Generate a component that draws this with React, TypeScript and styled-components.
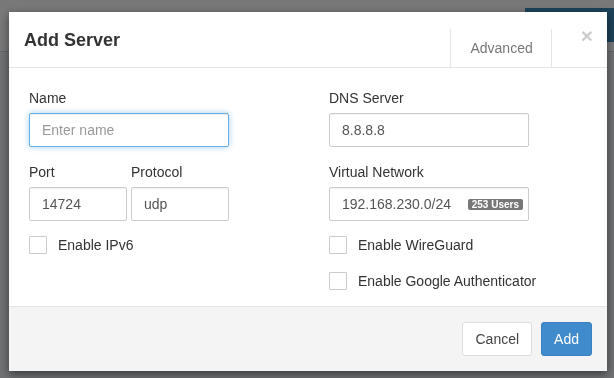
import React from 'react';
import styled, { createGlobalStyle } from 'styled-components';

const GlobalStyle = createGlobalStyle`
  html, body {
    margin: 0;
    padding: 0;
    height: 100%;
  }
  body {
    font-family: "Liberation Sans", Arial, sans-serif;
    font-size: 14px;
    line-height: 20px;
    color: #333;
    background: #ecf0f5;
  }
  * {
    box-sizing: border-box;
  }
`;

function App() {
  return (
    <Page>
      <GlobalStyle />
      <NavBar>
        <NavButton />
      </NavBar>

      <Backdrop>
        <Modal>
          <Header>
            <Title>Add Server</Title>
            <Tab>Advanced</Tab>
            <Close>×</Close>
          </Header>

          <Body>
            <Column>
              <Group>
                <Label>Name</Label>
                <Input placeholder="Enter name" focused />
              </Group>
              <Group>
                <Pair>
                  <div>
                    <Label>Port</Label>
                    <Input defaultValue="14724" />
                  </div>
                  <div>
                    <Label>Protocol</Label>
                    <Input defaultValue="udp" />
                  </div>
                </Pair>
              </Group>
              <Check>
                <Box type="checkbox" />
                Enable IPv6
              </Check>
            </Column>

            <Column>
              <Group>
                <Label>DNS Server</Label>
                <Input defaultValue="8.8.8.8" />
              </Group>
              <Group>
                <Label>Virtual Network</Label>
                <InputWrap>
                  <Input defaultValue="192.168.230.0/24" />
                  <Badge>253 Users</Badge>
                </InputWrap>
              </Group>
              <Check>
                <Box type="checkbox" />
                Enable WireGuard
              </Check>
              <Check>
                <Box type="checkbox" />
                Enable Google Authenticator
              </Check>
            </Column>
          </Body>

          <Footer>
            <Button>Cancel</Button>
            <Button primary>Add</Button>
          </Footer>
        </Modal>
      </Backdrop>
    </Page>
  );
}

const Page = styled.div`
  height: 100vh;
  overflow: hidden;
`;

const NavBar = styled.div`
  height: 52px;
  background: #fff;
  border-bottom: 1px solid #d2d6de;
  display: flex;
  justify-content: flex-end;
  align-items: flex-start;
`;

const NavButton = styled.div`
  width: 89px;
  height: 34px;
  margin-top: 8px;
  background: #3c8dbc;
`;

const Backdrop = styled.div`
  position: fixed;
  inset: 0;
  background: rgba(0, 0, 0, 0.53);
`;

const Modal = styled.div`
  width: 598px;
  margin: 12px 0 0 9px;
  background: #fff;
  box-shadow: 0 3px 9px rgba(0, 0, 0, 0.5);
`;

const Header = styled.div`
  height: 56px;
  display: flex;
  align-items: flex-start;
  padding: 0 14px 0 15px;
  border-bottom: 1px solid #e5e5e5;
`;

const Title = styled.h4`
  margin: 18px 0 0;
  flex: 1;
  font-size: 18px;
  line-height: 20px;
  font-weight: 700;
  color: #333;
`;

const Tab = styled.div`
  align-self: flex-end;
  height: 38px;
  padding: 9px 18px 0 19px;
  border-left: 1px solid #e5e5e5;
  border-right: 1px solid #e5e5e5;
  color: #777;
`;

const Close = styled.div`
  margin: 13px 0 0 29px;
  font-size: 21px;
  line-height: 21px;
  font-weight: 700;
  color: #000;
  opacity: 0.2;
`;

const Body = styled.div`
  display: grid;
  grid-template-columns: 300px 1fr;
  padding: 20px 20px 16px;
`;

const Column = styled.div`
  display: flex;
  flex-direction: column;
`;

const Group = styled.div`
  width: 200px;
  margin-bottom: 15px;
`;

const Label = styled.label`
  display: block;
  margin-bottom: 5px;
  color: #333;
`;

const Pair = styled.div`
  display: grid;
  grid-template-columns: 98px 98px;
  column-gap: 4px;
`;

const Input = styled.input<{ focused?: boolean }>`
  display: block;
  width: 100%;
  height: 34px;
  padding: 6px 12px;
  font: inherit;
  color: #555;
  background: #fff;
  border: 1px solid ${(p) => (p.focused ? '#66afe9' : '#ccc')};
  border-radius: 2px;
  outline: none;
  box-shadow: ${(p) =>
    p.focused
      ? 'inset 0 1px 1px rgba(0,0,0,.075), 0 0 6px rgba(102,175,233,.6)'
      : 'inset 0 1px 1px rgba(0,0,0,.05)'};

  &::placeholder {
    color: #999;
  }
`;

const InputWrap = styled.div`
  position: relative;
`;

const Badge = styled.span`
  position: absolute;
  right: 6px;
  top: 12px;
  height: 11px;
  padding: 0 4px;
  background: #777;
  border-radius: 2px;
  color: #fff;
  font-size: 10px;
  line-height: 11px;
  font-weight: 700;
`;

const Check = styled.label`
  display: flex;
  align-items: center;
  height: 18px;
  margin-bottom: 18px;
  color: #333;
  line-height: 18px;
  white-space: nowrap;

  &:last-child {
    margin-bottom: 0;
  }
`;

const Box = styled.input`
  appearance: none;
  width: 18px;
  height: 18px;
  margin: 0 11px 0 0;
  border: 1px solid #ccc;
  border-radius: 1px;
  background: #fff;
`;

const Footer = styled.div`
  display: flex;
  justify-content: flex-end;
  gap: 9px;
  padding: 15px;
  background: #f4f4f4;
  border-top: 1px solid #e5e5e5;
`;

const Button = styled.button<{ primary?: boolean }>`
  height: 34px;
  padding: 6px 12px;
  font: inherit;
  border-radius: 3px;
  border: 1px solid ${(p) => (p.primary ? '#3a80c0' : '#ddd')};
  background: ${(p) => (p.primary ? '#3f8bcc' : '#fff')};
  color: ${(p) => (p.primary ? '#fff' : '#444')};
`;

export default App;
